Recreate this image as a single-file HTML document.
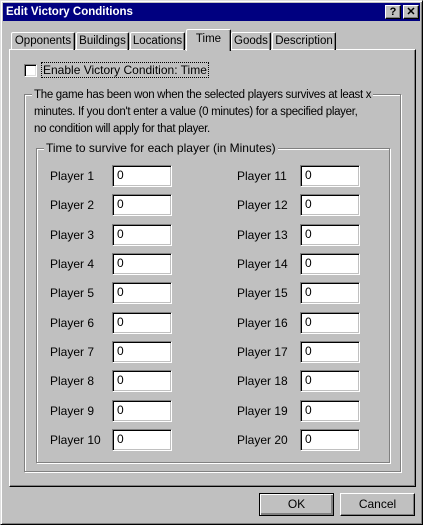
<!DOCTYPE html>
<html><head><style>
*{margin:0;padding:0;box-sizing:border-box}
body{width:423px;height:525px;background:#c0c0c0;font-family:"Liberation Sans",sans-serif;font-size:11px;color:#000;position:relative;overflow:hidden}
.a{position:absolute}
.win{left:0;top:0;width:423px;height:525px;border-top:1px solid #dfdfdf;border-left:1px solid #dfdfdf;border-right:1px solid #000;border-bottom:1px solid #000;box-shadow:inset 1px 1px #fff,inset -1px -1px #808080}
.title{left:3px;top:3px;width:417px;height:18px;background:#000080;color:#fff;font-weight:bold;font-size:11.5px;line-height:18px;padding-left:3px}
.tb{top:5px;width:16px;height:14px;background:#c0c0c0;border-top:1px solid #fff;border-left:1px solid #fff;border-right:1px solid #000;border-bottom:1px solid #000;box-shadow:inset -1px -1px #808080;color:#000;font-weight:bold;font-size:11px;text-align:center;line-height:12px}
.tab{top:32px;height:18px;border-top:1px solid #fff;border-left:1px solid #fff;border-right:1px solid #000;box-shadow:inset -1px 0 #808080;border-radius:2px 2px 0 0;text-align:center;line-height:16px;font-size:11.5px}
.panel{left:9px;top:49px;width:407px;height:438px;border-top:1px solid #fff;border-left:1px solid #fff;border-right:1px solid #000;border-bottom:1px solid #000;box-shadow:inset -1px -1px #808080}
.grp{border:1px solid #808080;box-shadow:1px 1px #fff,inset 1px 1px #fff}
.leg{background:#c0c0c0;padding:0 2px}
.inp{width:60px;height:22px;background:#fff;border-top:1px solid #808080;border-left:1px solid #808080;border-right:1px solid #fff;border-bottom:1px solid #fff;box-shadow:inset 1px 1px #000,inset -1px -1px #c0c0c0;padding:2px 0 0 4px;font-size:12px}
.lbl{font-size:12px}
.desc{font-size:11.5px;letter-spacing:-0.3px;white-space:nowrap;line-height:17px}
.btn{top:493px;width:75px;height:23px;background:#c0c0c0;border-top:1px solid #fff;border-left:1px solid #fff;border-right:1px solid #000;border-bottom:1px solid #000;box-shadow:inset -1px -1px #808080;text-align:center;line-height:20px;font-size:12px}
</style></head><body>
<div class="a win"></div>
<div class="a title">Edit Victory Conditions</div>
<div class="a tb" style="left:385px">?</div>
<div class="a tb" style="left:403px">✕</div>
<div class="a panel"></div>
<div class="a tab" style="left:11px;width:64px">Opponents</div>
<div class="a tab" style="left:76px;width:53px">Buildings</div>
<div class="a tab" style="left:130px;width:55px">Locations</div>
<div class="a tab" style="left:231px;width:40px">Goods</div>
<div class="a tab" style="left:272px;width:64px">Description</div>
<div class="a tab" style="left:186px;top:29px;width:45px;height:22px;background:#c0c0c0;z-index:2;line-height:18px">Time</div>
<div class="a" style="left:24px;top:64px;width:13px;height:13px;background:#fff;border-top:1px solid #808080;border-left:1px solid #808080;border-right:1px solid #fff;border-bottom:1px solid #fff;box-shadow:inset 1px 1px #000,inset -1px -1px #dfdfdf"></div>
<div class="a lbl" style="left:41px;top:62px;border:1px dotted #000;padding:0 1px;line-height:14px">Enable Victory Condition: Time</div>
<div class="a grp" style="left:24px;top:94px;width:377px;height:378px"></div>
<div class="a desc leg" style="left:32px;top:87px">The game has been won when the selected players survives at least x</div>
<div class="a desc" style="left:34px;top:104px">minutes. If you don't enter a value (0 minutes) for a specified player,</div>
<div class="a desc" style="left:34px;top:121px">no condition will apply for that player.</div>
<div class="a grp" style="left:36px;top:148px;width:354px;height:315px"></div>
<div class="a lbl leg" style="left:44px;top:141px;line-height:14px">Time to survive for each player (in Minutes)</div>
<div id="rows"></div>
<div class="a btn" style="left:259px;border:1px solid #000;box-shadow:inset 1px 1px #fff,inset -1px -1px #808080,inset -2px -2px #808080">OK</div>
<div class="a btn" style="left:340px">Cancel</div>
<script>
var h='';for(var i=0;i<10;i++){var y=Math.round(165+i*29.33);
h+='<div class="a lbl" style="left:50px;top:'+(y+4)+'px">Player '+(i+1)+'</div><div class="a inp" style="left:112px;top:'+y+'px">0</div>';
h+='<div class="a lbl" style="left:237px;top:'+(y+4)+'px">Player '+(i+11)+'</div><div class="a inp" style="left:300px;top:'+y+'px">0</div>';}
document.getElementById('rows').outerHTML=h;
</script>
</body></html>
